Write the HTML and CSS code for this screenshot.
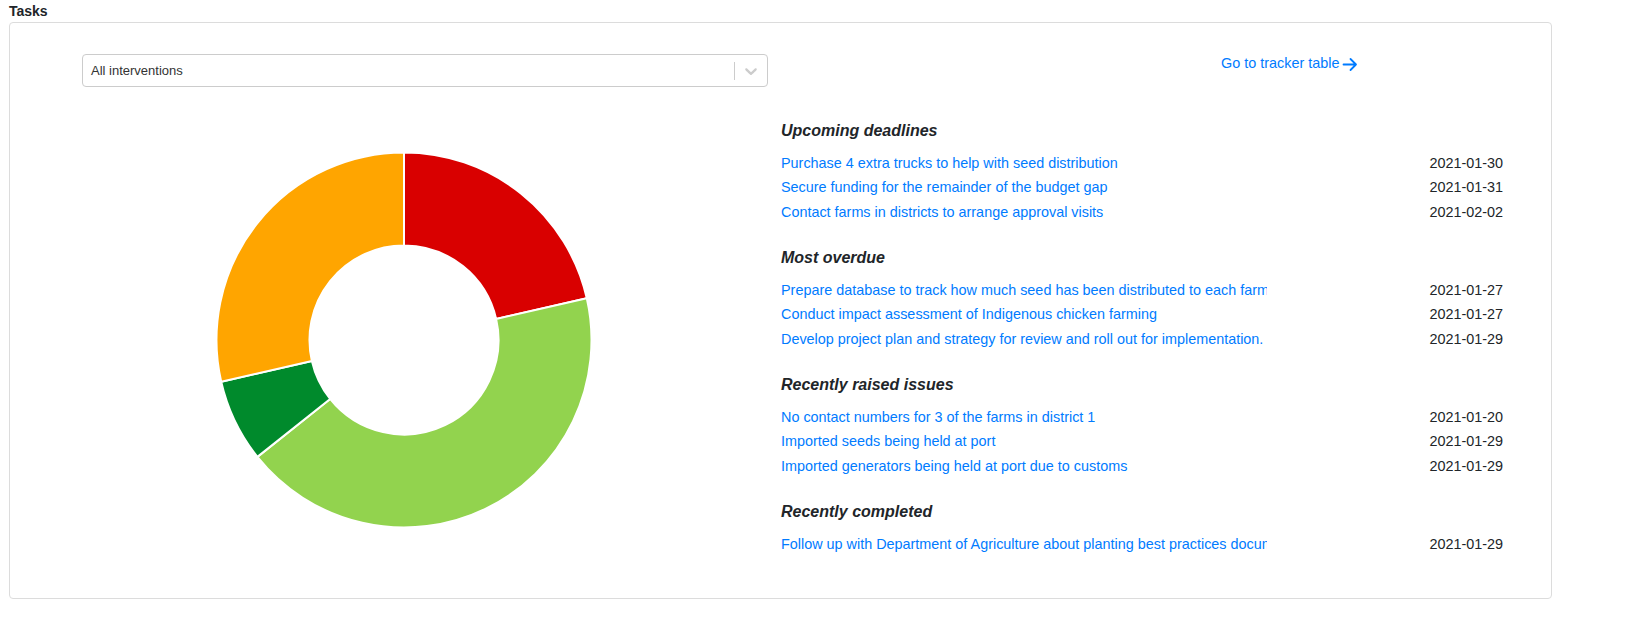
FILE: index.html
```html
<!DOCTYPE html>
<html>
<head>
<meta charset="utf-8">
<title>Tasks</title>
<link rel="stylesheet" href="styles.css">
</head>
<body>
<div class="title">Tasks</div>
<div class="card">
  <div class="left">
    <div class="select">
      <div class="select-value">All interventions</div>
      <div class="select-indicators">
        <span class="select-sep"></span>
        <svg class="chev" width="20" height="20" viewBox="0 0 20 20"><path d="M4.516 7.548c0.436-0.446 1.043-0.481 1.576 0l3.908 3.747 3.908-3.747c0.533-0.481 1.141-0.446 1.574 0 0.436 0.445 0.408 1.197 0 1.615-0.406 0.418-4.695 4.502-4.695 4.502-0.217 0.223-0.502 0.335-0.787 0.335s-0.57-0.112-0.789-0.335c0 0-4.287-4.084-4.695-4.502s-0.436-1.17 0-1.615z" fill="#cccccc"/></svg>
      </div>
    </div>
    <svg class="donut" width="376" height="376" viewBox="-188 -188 376 376">
      <g stroke="#ffffff" stroke-width="2" stroke-linejoin="round">
        <path id="s1" fill="#d90000"/>
        <path id="s2" fill="#92d34e"/>
        <path id="s3" fill="#008a2c"/>
        <path id="s4" fill="#ffa500"/>
      </g>
    </svg>
  </div>
  <div class="right">
    <div class="link-row">
      <a class="tracker-link" href="#">Go to tracker table<svg width="16" height="16" viewBox="0 0 16 16"><path d="M1.5 8.5h12.5M8.5 3l5.5 5.5-5.5 5.5" fill="none" stroke="#007bff" stroke-width="1.8" stroke-linecap="round" stroke-linejoin="round"/></svg></a>
    </div>
    <div class="section">
      <h3>Upcoming deadlines</h3>
      <div class="row"><a class="name" href="#">Purchase 4 extra trucks to help with seed distribution</a><span class="date">2021-01-30</span></div>
      <div class="row"><a class="name" href="#">Secure funding for the remainder of the budget gap</a><span class="date">2021-01-31</span></div>
      <div class="row"><a class="name" href="#">Contact farms in districts to arrange approval visits</a><span class="date">2021-02-02</span></div>
    </div>
    <div class="section">
      <h3>Most overdue</h3>
      <div class="row"><a class="name" href="#">Prepare database to track how much seed has been distributed to each farmer</a><span class="date">2021-01-27</span></div>
      <div class="row"><a class="name" href="#">Conduct impact assessment of Indigenous chicken farming</a><span class="date">2021-01-27</span></div>
      <div class="row"><a class="name" href="#">Develop project plan and strategy for review and roll out for implementation.</a><span class="date">2021-01-29</span></div>
    </div>
    <div class="section">
      <h3>Recently raised issues</h3>
      <div class="row"><a class="name" href="#">No contact numbers for 3 of the farms in district 1</a><span class="date">2021-01-20</span></div>
      <div class="row"><a class="name" href="#">Imported seeds being held at port</a><span class="date">2021-01-29</span></div>
      <div class="row"><a class="name" href="#">Imported generators being held at port due to customs</a><span class="date">2021-01-29</span></div>
    </div>
    <div class="section last">
      <h3>Recently completed</h3>
      <div class="row"><a class="name" href="#">Follow up with Department of Agriculture about planting best practices document</a><span class="date">2021-01-29</span></div>
    </div>
  </div>
</div>
<script>
(function () {
  var vals = [3, 6, 1, 4];
  var total = 14, R = 187.5, r = 94.5, a = 0;
  function pt(rad, ang) {
    return [rad * Math.sin(ang), -rad * Math.cos(ang)];
  }
  for (var i = 0; i < vals.length; i++) {
    var a0 = a, a1 = a + vals[i] / total * Math.PI * 2;
    a = a1;
    var large = (a1 - a0) > Math.PI ? 1 : 0;
    var p0 = pt(R, a0), p1 = pt(R, a1), q1 = pt(r, a1), q0 = pt(r, a0);
    var d = 'M' + p0[0] + ' ' + p0[1] + ' A' + R + ' ' + R + ' 0 ' + large + ' 1 ' + p1[0] + ' ' + p1[1] +
      ' L' + q1[0] + ' ' + q1[1] + ' A' + r + ' ' + r + ' 0 ' + large + ' 0 ' + q0[0] + ' ' + q0[1] + ' Z';
    document.getElementById('s' + (i + 1)).setAttribute('d', d);
  }
})();
</script>
</body>
</html>
```

FILE: styles.css
```css
html, body {
  margin: 0;
  padding: 0;
  background: #ffffff;
}
body {
  font-family: "Liberation Sans", Arial, sans-serif;
  color: #212529;
  font-size: 14.4px;
}
.title {
  font-weight: bold;
  font-size: 14px;
  line-height: 16px;
  padding: 3px 0 0 9px;
  margin-bottom: 3px;
  color: #212529;
}
.card {
  margin-left: 9px;
  width: 1541px;
  border: 1px solid #dcdcdc;
  border-radius: 4px;
  display: flex;
}
.left {
  width: 771px;
  flex: none;
}
.select {
  margin: 31px 0 0 72px;
  width: 684px;
  height: 31px;
  border: 1px solid #cccccc;
  border-radius: 4px;
  display: flex;
  align-items: center;
}
.select-value {
  flex: 1;
  padding: 0 8px;
  font-size: 13px;
  color: #333333;
}
.select-indicators {
  display: flex;
  align-items: center;
  padding-right: 6px;
}
.select-sep {
  width: 1px;
  height: 18px;
  background: #cccccc;
  margin-right: 6px;
}
.chev {
  display: block;
}
.donut {
  display: block;
  margin: 65px 0 0 206px;
}
.right {
  width: 722px;
  flex: none;
  padding-bottom: 42px;
}
.link-row {
  margin-top: 30px;
  height: 20px;
  line-height: 20px;
  display: flex;
  padding-left: 440px;
}
.tracker-link {
  color: #007bff;
  text-decoration: none;
  font-size: 14.4px;
  display: flex;
  align-items: center;
  gap: 3px;
}
.tracker-link svg {
  display: block;
  margin-top: 2px;
}
.section {
  margin-top: 48px;
}
.section + .section {
  margin-top: 24px;
}
.section h3 {
  margin: 0 0 9.8px 0;
  font-size: 16px;
  line-height: 20px;
  font-weight: bold;
  font-style: italic;
  color: #212529;
}
.row {
  display: flex;
  height: 24.4px;
  line-height: 24.4px;
  align-items: center;
}
.name {
  width: 486px;
  flex: none;
  overflow: hidden;
  white-space: nowrap;
  color: #007bff;
  text-decoration: none;
}
.date {
  flex: 1;
  text-align: right;
  color: #212529;
}
```
